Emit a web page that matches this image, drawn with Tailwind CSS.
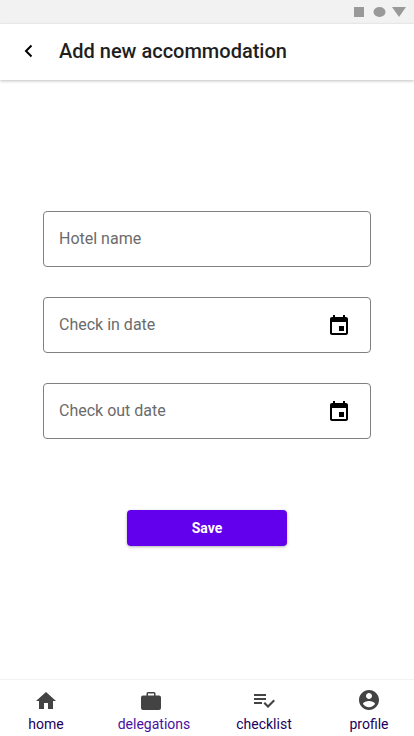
<!DOCTYPE html>
<html lang="en">
<head>
<meta charset="utf-8">
<meta name="viewport" content="width=device-width, initial-scale=1">
<title>Add new accommodation</title>
<script src="https://cdn.jsdelivr.net/npm/@tailwindcss/browser@4"></script>
</head>
<body class="flex min-h-dvh flex-col bg-white font-[Roboto,sans-serif] text-[#1f1f1f]">
  <div class="flex h-6 shrink-0 items-center justify-end gap-2 bg-[#f2f2f2] px-2 text-[#999]" aria-hidden="true">
    <svg class="h-3 w-13 fill-current" viewBox="0 0 52 12"><path d="M-1 1h11v10H-1z"/><ellipse cx="25.500" cy="6" rx="6" ry="5"/><path d="M38 1h14l-7 10z"/></svg>
  </div>

  <header class="flex h-14 shrink-0 items-center gap-4 bg-white px-[15px] pb-0.5 shadow-[0_1px_3px_rgba(0,0,0,0.25)]">
    <button type="button" aria-label="Back" class="flex size-7 items-center justify-center">
      <svg class="size-5" viewBox="0 0 20 20" fill="none" stroke="#000" stroke-width="2"><path d="M12.500 4.500 7 10l5.500 5.500"/></svg>
    </button>
    <h1 class="text-xl font-medium">Add new accommodation</h1>
  </header>

  <main class="flex flex-1 flex-col justify-center px-[43px] pb-0.5">
    <form class="flex flex-col">
      <div class="flex flex-col gap-[30px]">
        <div class="flex h-14 items-center rounded border border-[#808080] px-[15px]">
          <input type="text" aria-label="Hotel name" placeholder="Hotel name" class="min-w-0 flex-1 text-base outline-none placeholder:text-[#6b6b6b]">
        </div>
        <div class="flex h-14 items-center rounded border border-[#808080] pr-[19px] pl-[15px]">
          <input type="text" aria-label="Check in date" placeholder="Check in date" class="min-w-0 flex-1 text-base outline-none placeholder:text-[#6b6b6b]">
          <button type="button" aria-label="Choose check in date" class="pt-0.5">
            <svg class="size-6" viewBox="0 0 24 24"><path d="M17 12h-5v5h5v-5zM16 1v2H8V1H6v2H5c-1.110 0-1.990.9-1.990 2L3 19c0 1.100.89 2 2 2h14c1.100 0 2-.9 2-2V5c0-1.100-.9-2-2-2h-1V1h-2zm3 18H5V8h14v11z"/></svg>
          </button>
        </div>
        <div class="flex h-14 items-center rounded border border-[#808080] pr-[19px] pl-[15px]">
          <input type="text" aria-label="Check out date" placeholder="Check out date" class="min-w-0 flex-1 text-base outline-none placeholder:text-[#6b6b6b]">
          <button type="button" aria-label="Choose check out date" class="pt-0.5">
            <svg class="size-6" viewBox="0 0 24 24"><path d="M17 12h-5v5h5v-5zM16 1v2H8V1H6v2H5c-1.110 0-1.990.9-1.990 2L3 19c0 1.100.89 2 2 2h14c1.100 0 2-.9 2-2V5c0-1.100-.9-2-2-2h-1V1h-2zm3 18H5V8h14v11z"/></svg>
          </button>
        </div>
      </div>
      <button type="submit" class="mt-[71px] h-9 w-40 self-center rounded bg-[#6200ee] text-sm font-bold text-white shadow-[0_1px_3px_rgba(0,0,0,0.3)]">Save</button>
    </form>
  </main>

  <nav class="grid h-[57px] shrink-0 grid-cols-[92fr_124fr_96fr_102fr] border-t border-[#f2f2f2] pt-2 text-sm text-[#23005c]">
    <a href="#home" class="flex flex-col items-center gap-0.5">
      <svg class="size-6 fill-[#434343]" viewBox="0 0 24 24"><path d="M10 21v-6h4v6h5v-8h3L12 4 2 13h3v8z"/></svg>
      <span>home</span>
    </a>
    <a href="#delegations" class="flex flex-col items-center gap-0.5 text-[#4b0f9f]" aria-current="page">
      <svg class="mr-1.5 size-6 fill-[#434343]" viewBox="0 0 24 24"><path fill-rule="evenodd" d="M9 4h6q1.500 0 1.500 1.500V7.500H20q2 0 2 2V20q0 2-2 2H4q-2 0-2-2V9.500q0-2 2-2h3.500V5.500Q7.500 4 9 4zM9 5.500v2h6v-2z"/></svg>
      <span>delegations</span>
    </a>
    <a href="#checklist" class="flex flex-col items-center gap-0.5">
      <svg class="size-6 fill-[#434343]" viewBox="0 0 24 24"><path d="M14 10H2v2h12v-2zm0-4H2v2h12V6zM2 16h8v-2H2v2zm19.500-4.500L23 13l-6.990 7-4.510-4.500L13 14l3.010 3 5.490-5.500z"/></svg>
      <span>checklist</span>
    </a>
    <a href="#profile" class="flex flex-col items-center gap-0.5 pl-3">
      <svg class="size-6 fill-[#434343]" viewBox="0 0 24 24"><path d="M12 2C6.480 2 2 6.480 2 12s4.480 10 10 10 10-4.480 10-10S17.520 2 12 2zm0 3c1.660 0 3 1.340 3 3s-1.340 3-3 3-3-1.340-3-3 1.340-3 3-3zm0 14.200c-2.500 0-4.710-1.280-6-3.220.03-1.990 4-3.080 6-3.080 1.990 0 5.970 1.090 6 3.080-1.290 1.940-3.500 3.220-6 3.220z"/></svg>
      <span>profile</span>
    </a>
  </nav>
</body>
</html>
